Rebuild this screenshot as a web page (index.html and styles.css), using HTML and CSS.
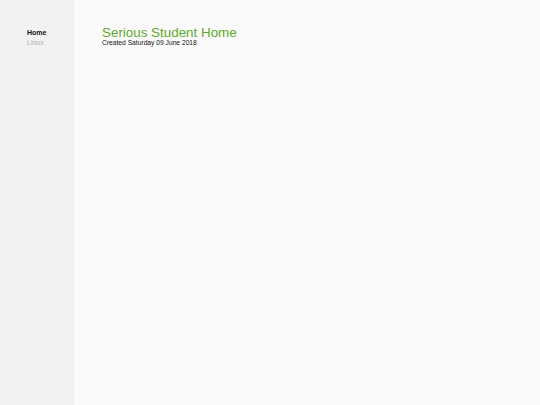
FILE: index.html
```html
<!DOCTYPE html>
<html>
<head>
<meta charset="utf-8">
<link rel="stylesheet" href="styles.css">
</head>
<body>
<div class="layout">
  <nav class="sidebar">
    <a class="nav-item active" href="#">Home</a>
    <a class="nav-item" href="#">Linux</a>
  </nav>
  <main class="content">
    <h1 class="title">Serious Student Home</h1>
    <div class="created">Created Saturday 09 June 2018</div>
  </main>
</div>
</body>
</html>
```
FILE: styles.css
```css
html, body {
  margin: 0;
  padding: 0;
  height: 100%;
  background: #fafafa;
  font-family: "Liberation Sans", Arial, sans-serif;
}
.layout {
  display: flex;
  height: 100%;
}
.sidebar {
  width: 74px;
  flex: none;
  background: #f2f2f2;
  border-right: 1px solid #efefef;
  display: flex;
  flex-direction: column;
  padding: 28px 0 0 27px;
  box-sizing: border-box;
}
.nav-item {
  font-size: 7px;
  line-height: 10px;
  color: #b0b0b0;
  text-decoration: none;
}
.nav-item.active {
  color: #111111;
  font-weight: bold;
}
.content {
  flex: 1;
  padding: 26px 0 0 28px;
}
.title {
  margin: 0;
  font-size: 13.4px;
  line-height: 13px;
  font-weight: normal;
  color: #5fa82c;
}
.created {
  font-size: 6.7px;
  line-height: 8px;
  color: #111111;
}
```
